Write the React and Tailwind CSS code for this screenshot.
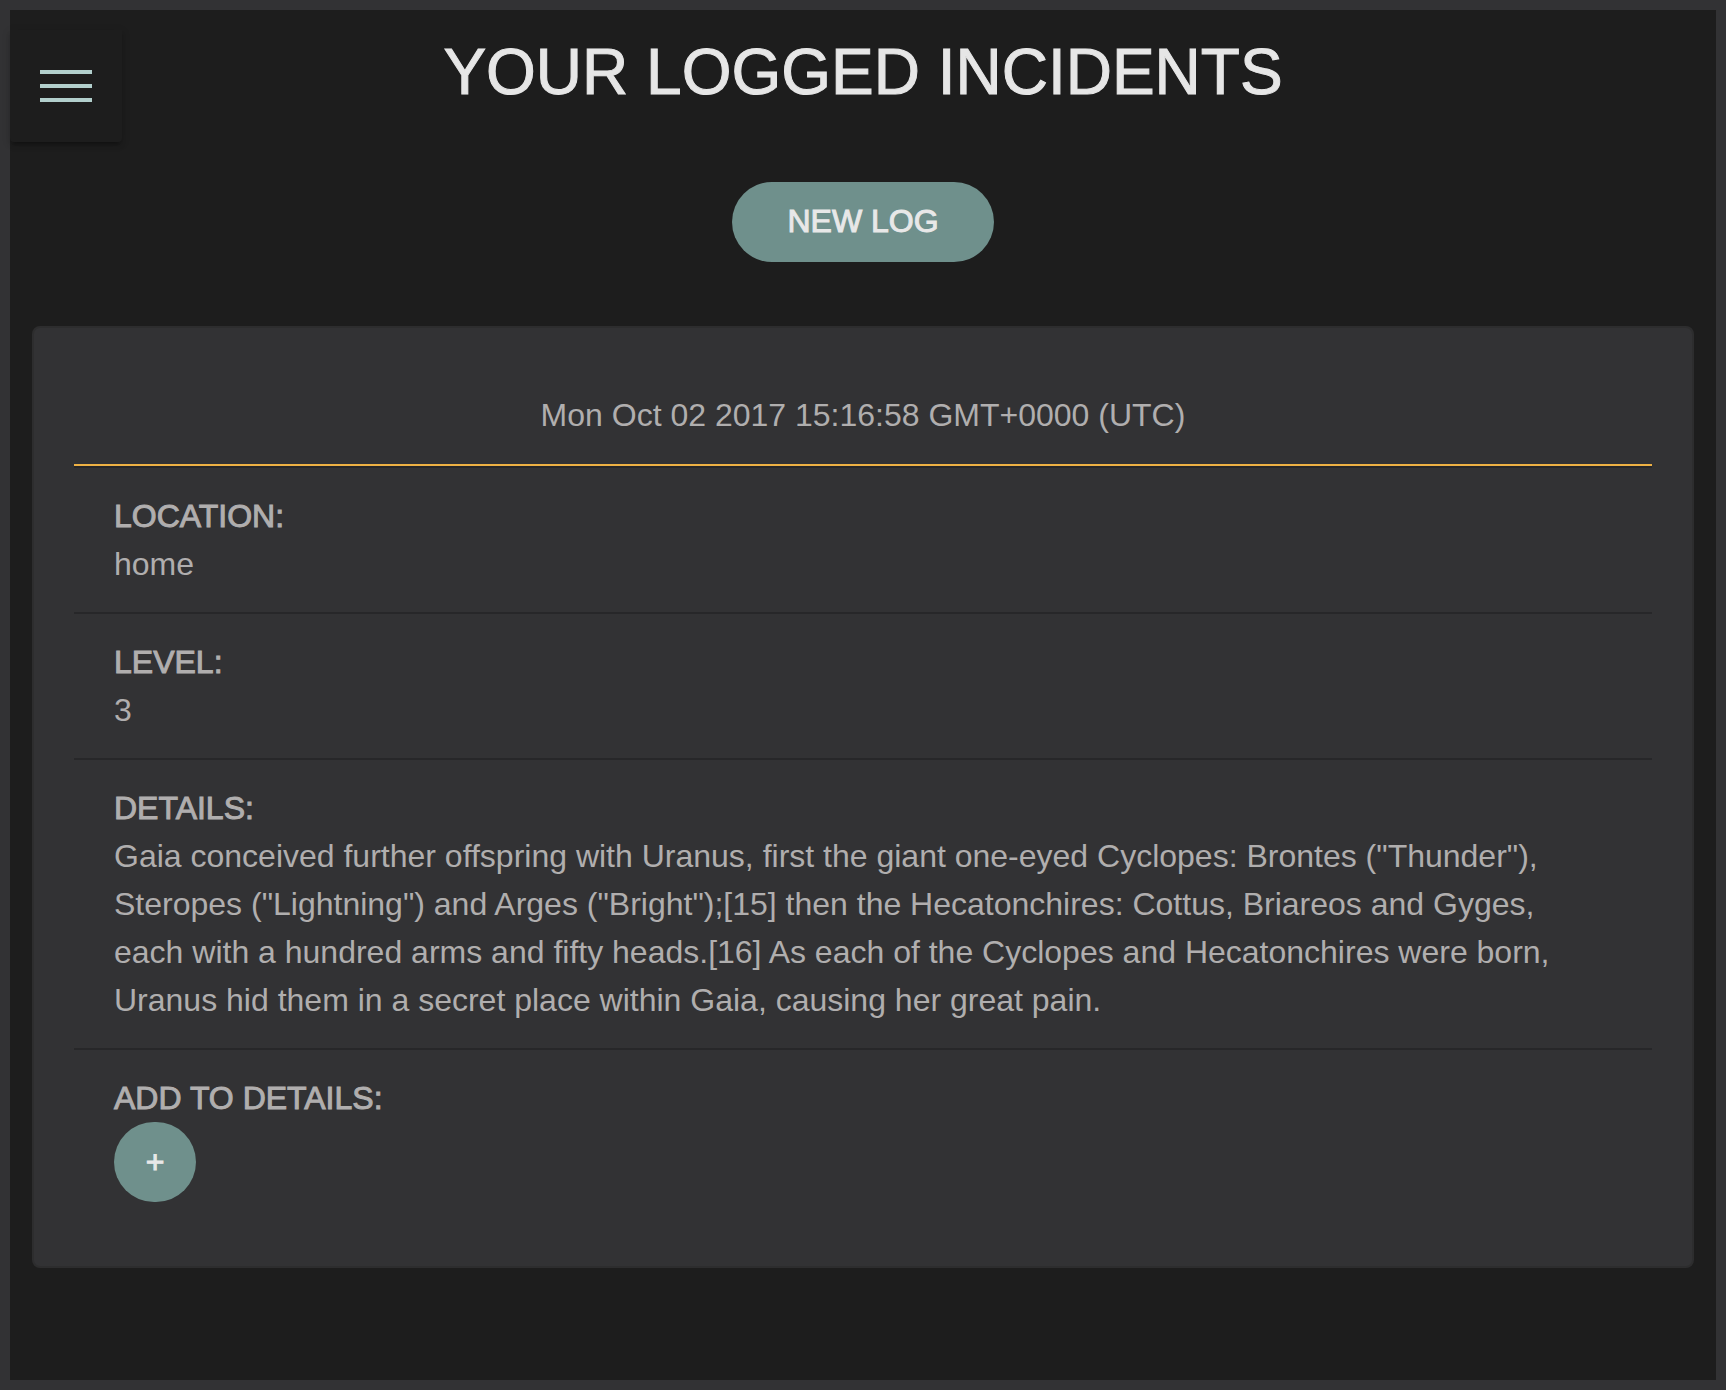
const heavy = "[-webkit-text-stroke:1px_currentColor]";

function Section({ label, children }) {
  return (
    <section className="border-t-2 border-[#272729] px-10 py-6">
      <h2 className={`uppercase ${heavy}`}>{label}:</h2>
      {children}
    </section>
  );
}

export default function App() {
  return (
    <div className="min-h-screen border-10 border-[#323234] bg-[#1d1d1d] pb-28 font-['Liberation_Sans',Arial,sans-serif] text-[32px] leading-12 text-[#b0aeae]">
      <header className="relative flex flex-col items-center">
        <button
          type="button"
          aria-label="Open menu"
          className="absolute top-5 left-0 flex size-28 flex-col items-start justify-center gap-2.5 rounded-b-sm bg-[#1d1d1d] pl-7.5 shadow-[0_4px_4px_rgba(0,0,0,0.14),0_6px_2px_-4px_rgba(0,0,0,0.2),0_2px_10px_rgba(0,0,0,0.12)]"
        >
          <span className="h-1 w-13 bg-[#b2cfcc]" />
          <span className="h-1 w-13 bg-[#b2cfcc]" />
          <span className="h-1 w-13 bg-[#b2cfcc]" />
        </button>
        <h1 className={`pt-[22px] text-center text-[64px] leading-20 text-[#e6e6e6] uppercase ${heavy}`}>
          Your logged incidents
        </h1>
        <button
          type="button"
          className={`mt-[70px] h-20 rounded-full bg-[#6f908c] px-[55px] pb-0.5 text-[#e8e8e8] uppercase ${heavy}`}
        >
          New log
        </button>
      </header>

      <main className="mx-5.5 mt-16 rounded-lg border-2 border-[#2d2d2e] bg-[#323234] p-10">
        <p className="border-b-2 border-[#eeb144] pt-[23px] pb-[25px] text-center">
          Mon Oct 02 2017 15:16:58 GMT+0000 (UTC)
        </p>
        <Section label="Location">
          <p>home</p>
        </Section>
        <Section label="Level">
          <p>3</p>
        </Section>
        <Section label="Details">
          <p>
            Gaia conceived further offspring with Uranus, first the giant one-eyed Cyclopes: Brontes
            ("Thunder"), Steropes ("Lightning") and Arges ("Bright");[15] then the Hecatonchires: Cottus,
            Briareos and Gyges, each with a hundred arms and fifty heads.[16] As each of the Cyclopes and
            Hecatonchires were born, Uranus hid them in a secret place within Gaia, causing her great pain.
          </p>
        </Section>
        <Section label="Add to details">
          <button
            type="button"
            aria-label="Add to details"
            className={`flex h-20 w-[82px] items-center justify-center rounded-full bg-[#6f908c] text-[#e8e8e8] ${heavy}`}
          >
            +
          </button>
        </Section>
      </main>
    </div>
  );
}
